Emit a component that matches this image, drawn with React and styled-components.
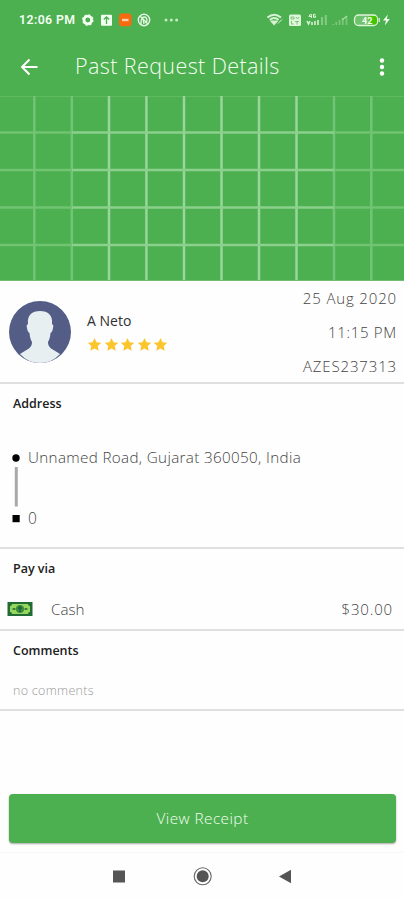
import React from "react";
import styled, { createGlobalStyle } from "styled-components";

const GREEN = "#4caf50";

const Global = createGlobalStyle`
  body { margin: 0; background: #fff; }
  * { box-sizing: border-box; }
`;

const Screen = styled.main`
  width: 404px;
  height: 900px;
  display: flex;
  flex-direction: column;
  background: #fefefe;
  overflow: hidden;
  font-family: "Open Sans", "Noto Sans", sans-serif;
`;

const Text = styled.span`
  font-family: ${(p) => p.$font || '"Open Sans", "Noto Sans", sans-serif'};
  font-size: ${(p) => p.$size || 15.5}px;
  font-weight: ${(p) => p.$weight || 300};
  letter-spacing: ${(p) => p.$track || 0}px;
  color: ${(p) => p.$color || "#444"};
  line-height: 20px;
  white-space: nowrap;
`;

const StatusBar = styled.header`
  height: 40px;
  flex: none;
  display: flex;
  align-items: center;
  justify-content: space-between;
  padding: 0 14px 0 19px;
  background: ${GREEN};
`;

const Toolbar = styled.div`
  height: 56px;
  flex: none;
  display: flex;
  align-items: center;
  padding: 0 14px 3px 20px;
  background: ${GREEN};
`;

const Title = styled.h1`
  flex: 1;
  margin: 0 0 1px 35px;
  font-size: 21.5px;
  font-weight: 300;
  line-height: 28px;
  letter-spacing: 0.4px;
  color: #f4fff0;
  white-space: nowrap;
`;

const IconButton = styled.button`
  display: flex;
  padding: 0;
  border: 0;
  background: none;
`;

const MapArea = styled.div`
  height: 185px;
  flex: none;
  background: ${GREEN};
  svg { display: block; }
`;

const Section = styled.section`
  height: ${(p) => p.$height}px;
  flex: none;
  border-bottom: 2px solid #dfdfdf;
`;

const Profile = styled(Section)`
  display: flex;
  padding: 0 7px 0 8px;
`;

const Avatar = styled.div`
  width: 64px;
  margin-top: 19px;
`;

const Person = styled.div`
  display: flex;
  flex-direction: column;
  flex: 1;
  padding: 30px 0 0 15px;
`;

const Stars = styled.div`
  display: flex;
  gap: 1.6px;
  margin-top: 6px;
`;

const TripMeta = styled.div`
  display: flex;
  flex-direction: column;
  align-items: flex-end;
  gap: 14px;
  padding-top: 7px;
`;

const Heading = styled.h2`
  margin: 0;
  padding: 10px 0 0 13px;
  font-size: 12.5px;
  font-weight: 600;
  line-height: 20px;
  color: #202020;
`;

const Route = styled.div`
  display: flex;
  gap: 6px;
  padding: 33px 0 0 11px;
  svg { margin-top: 1px; }
`;

const Stops = styled.div`
  display: flex;
  flex-direction: column;
  gap: 41px;
`;

const PayRow = styled.div`
  display: flex;
  align-items: center;
  height: 20px;
  margin-top: 20px;
  padding: 0 11px 0 7px;
`;

const Method = styled.div`
  flex: 1;
  display: flex;
  padding-left: 18px;
`;

const Comment = styled.div`
  display: flex;
  padding: 20px 0 0 13px;
`;

const Footer = styled.footer`
  flex: 1;
  display: flex;
  flex-direction: column;
  justify-content: flex-end;
`;

const ReceiptButton = styled.button`
  height: 49px;
  margin: 0 8px 9px 9px;
  padding: 0 0 2px;
  border: 0;
  border-radius: 4px;
  background: ${GREEN};
  box-shadow: 0 1px 2px rgba(0, 0, 0, 0.35);
`;

const SystemNav = styled.nav`
  height: 48px;
  display: flex;
  border-top: 1px solid #f8f8f8;
`;

function StatusIcons() {
  return (
    <svg width="310" height="20" viewBox="80 10 310 20" fill="#f0fff0">
      <circle cx="87.8" cy="20" r="3.8" fill="none" stroke="#f6fff2" strokeWidth="2.7" />
      <circle cx="87.8" cy="20" r="5" fill="none" stroke="#f6fff2" strokeWidth="1.5" strokeDasharray="2 1.93" />
      <rect x="101" y="14.7" width="11" height="11" rx="1" />
      <path d="M106.5 24v-6M103.8 19.5l2.7-2.5 2.7 2.5" fill="none" stroke={GREEN} strokeWidth="1.3" />
      <rect x="119" y="13.5" width="12.5" height="12.8" rx="3" fill="#f76b10" />
      <path d="M122 20h6.5" stroke="#ffd0ad" strokeWidth="2.4" />
      <circle cx="144" cy="20" r="5.7" fill="none" stroke="#e5f7e1" strokeWidth="1.4" />
      <path d="M140 16l8 8M141 24c0-4 1-7 3-7s3 2 3 4l-2 2M143 19l1 5" fill="none" stroke="#e5f7e1" strokeWidth="1.3" />
      <g fill="#c9ebc4"><circle cx="166" cy="20" r="1.5" /><circle cx="171.3" cy="20" r="1.5" /><circle cx="176.6" cy="20" r="1.5" /></g>
      <g fill="none" stroke="#d7f2d3" strokeWidth="1.9">
        <path d="M267.4 17.5q6.8-5.5 13.6 0M269.8 19.8q4.4-3.6 8.8 0" />
        <path d="M271.8 21.5h4.6l-2.3 2.5z" fill="#e0f5dd" />
        <path d="M278 23.5l4-4" strokeWidth="1" />
      </g>
      <rect x="289" y="14.5" width="12" height="11.5" rx="1.5" fill="#ddf5d8" />
      <path d="M291 17h3v2h-3zM296 17l1.5 2 1.5-2M291.5 21v3h2M295 21.5h4M297 21.5v3" stroke="#78bf76" strokeWidth=".9" fill="none" />
      <path d="M310.5 14l-1.6 2.4h3M311.3 14v4M315.5 14.3h-2v3h2v-1.4h-1" fill="none" stroke="#e0f6db" strokeWidth="1" />
      <path d="M307 21l1.5 3 1.5-3M312 25v-3M315 25v-4M318 25v-5" fill="none" stroke="#d5f0d0" strokeWidth="1.6" />
      <path d="M322 25v-8M325.8 25V15" stroke="#86cb83" strokeWidth="2" />
      <path d="M333 25v-1M336.3 25v-3M339.6 25v-5M342.8 25v-7M346.5 25V16" stroke="#7cc579" strokeWidth="1.8" />
      <path d="M342 20l5-4" stroke="#a9dca4" strokeWidth="1.3" />
      <rect x="354.5" y="15" width="23" height="10.5" rx="4" fill="#6fc26b" stroke="#dff4d9" strokeWidth="1.3" />
      <path d="M369 16h5a3 3 0 0 1 3 3v2.5a3 3 0 0 1-3 3h-5z" fill="#43c400" />
      <path d="M379.2 18v4" stroke="#dff4d9" strokeWidth="1.2" />
      <text x="362" y="23.5" fontFamily="Roboto, sans-serif" fontSize="9" fontWeight="700" fill="#f3fff0">42</text>
      <path d="M387.8 14.5l-4.8 6h3l-1.2 5 5-6.5h-3z" />
    </svg>
  );
}

const COLUMNS = [34.3, 71.8, 109, 146.4, 184, 221.5, 259, 296.5, 334, 371.3];
const ROWS = [36.5, 74, 111.5, 149];

function MapGrid() {
  return (
    <svg width="404" height="185" viewBox="0 0 404 185" fill="none">
      <path d="M0 .5H404" stroke="#5fb961" />
      {COLUMNS.map((x) => (
        <path key={x} d={`M${x} 0V185`} stroke={x < 75 || x > 330 ? "#72c574" : "#98d799"} strokeWidth="2.5" />
      ))}
      {ROWS.map((y) => (
        <g key={y} strokeWidth="2.5">
          <path d={`M0 ${y}H72M334 ${y}H404`} stroke="#70c472" />
          <path d={`M72 ${y}H334`} stroke="#8bd08c" />
        </g>
      ))}
      <path d="M0 184.5H404" stroke="#70bd73" />
    </svg>
  );
}

function Star() {
  return (
    <svg width="15" height="15" viewBox="0 0 24 24" fill="#fbc52d">
      <path d="M12 1.5l3.2 6.9 7.6.9-5.6 5.2 1.5 7.5-6.7-3.7L5.3 22l1.5-7.5-5.6-5.2 7.6-.9z" />
    </svg>
  );
}

export default function App() {
  return (
    <Screen>
      <Global />
      <StatusBar>
        <Text $font="Roboto, sans-serif" $size={12.3} $weight={600} $track={0.42} $color="#f2fff0">12:06 PM</Text>
        <StatusIcons />
      </StatusBar>
      <Toolbar>
        <IconButton aria-label="Back">
          <svg width="20" height="20" viewBox="0 0 20 20" fill="none" stroke="#fff" strokeWidth="2">
            <path d="M17.5 10H2.5M9.5 2.5L2 10l7.5 7.5" />
          </svg>
        </IconButton>
        <Title>Past Request Details</Title>
        <IconButton aria-label="More options">
          <svg width="16" height="20" viewBox="0 0 16 20" fill="#fff">
            <circle cx="8" cy="3.5" r="2.2" /><circle cx="8" cy="10" r="2.2" /><circle cx="8" cy="16.5" r="2.2" />
          </svg>
        </IconButton>
      </Toolbar>
      <MapArea><MapGrid /></MapArea>

      <Profile $height={103}>
        <Avatar>
          <svg width="64" height="64" viewBox="0 0 64 64">
            <circle cx="32" cy="32" r="31" fill="#535d86" />
            <path d="M32 11C24 11 19 15 20 24q-2 1-1 4 .5 4 2.5 5Q22 39 24 42c0 6-4 7-12 12Q20 63 32 63t20-9c-8-5-12-6-12-12q2-3 2.5-9 2-1 2.5-5 1-3-1-4c1-9-4-13-12-13z" fill="#e7eff0" />
          </svg>
        </Avatar>
        <Person>
          <Text $size={14} $weight={400} $color="#303030">A Neto</Text>
          <Stars>{[0, 1, 2, 3, 4].map((i) => <Star key={i} />)}</Stars>
        </Person>
        <TripMeta>
          <Text $size={15} $track={0.85}>25 Aug 2020</Text>
          <Text $size={15} $track={0.7}>11:15 PM</Text>
          <Text $size={15} $track={0.85}>AZES237313</Text>
        </TripMeta>
      </Profile>

      <Section $height={165}>
        <Heading>Address</Heading>
        <Route>
          <svg width="11" height="84" viewBox="0 0 11 84">
            <circle cx="5" cy="10" r="3.7" />
            <path d="M5.3 19V58.5" stroke="#a9a9a9" strokeWidth="3" />
            <rect x="1.5" y="67" width="7.2" height="7.2" />
          </svg>
          <Stops>
            <Text $size={15.2} $track={0.35}>Unnamed Road, Gujarat 360050, India</Text>
            <Text>0</Text>
          </Stops>
        </Route>
      </Section>

      <Section $height={82}>
        <Heading>Pay via</Heading>
        <PayRow>
          <svg width="26" height="16" viewBox="0 0 26 16">
            <rect x=".5" y="1" width="25" height="14" fill="#216b35" />
            <path d="M5 3h16q0 2 2 2v6q-2 0-2 2H5q0-2-2-2V5q2 0 2-2z" fill="#97d75e" />
            <circle cx="13" cy="8" r="4" fill="#398c3c" />
            <path d="M13 5v6M11 7h4M5.5 8h3M17.5 8h3" stroke="#206336" strokeWidth="1.5" />
          </svg>
          <Method><Text $size={15.2}>Cash</Text></Method>
          <Text $size={15} $track={0.85}>$30.00</Text>
        </PayRow>
      </Section>

      <Section $height={80}>
        <Heading>Comments</Heading>
        <Comment><Text $size={12.5} $color="#999" $track={0.3}>no comments</Text></Comment>
      </Section>

      <Footer>
        <ReceiptButton><Text $size={15.3} $track={0.45} $color="#f3fff0">View Receipt</Text></ReceiptButton>
        <SystemNav aria-label="System navigation">
          <svg width="404" height="47" viewBox="0 0 404 47" fill="#555">
            <rect x="113" y="17.5" width="12" height="12" />
            <circle cx="202.7" cy="23.3" r="8.5" fill="none" stroke="#666" strokeWidth="1.1" />
            <circle cx="202.7" cy="23.3" r="6" />
            <path d="M279 23.5L291 16.8v13.5z" />
          </svg>
        </SystemNav>
      </Footer>
    </Screen>
  );
}
